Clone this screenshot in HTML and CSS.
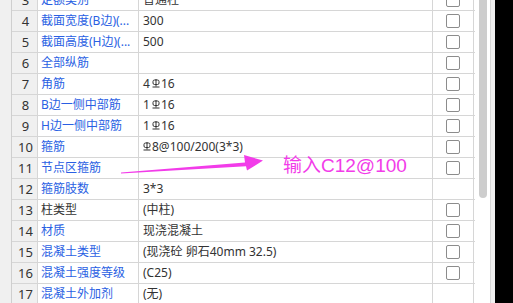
FILE: index.html
```html
<!DOCTYPE html>
<html lang="zh">
<head>
    <meta charset="UTF-8">
    <meta name="viewport" content="width=device-width, initial-scale=1.0">
    <title>属性编辑</title>
    <link rel="stylesheet" href="styles.css">
</head>
<body>
    <div class="screen">
        <div class="gutter"></div>

        <!-- 属性列表 -->
        <div class="grid">
            <div class="row first">
                <div class="num">3</div>
                <div class="name">定额类别</div>
                <div class="value">普通柱</div>
                <div class="check"><span class="box"></span></div>
            </div>
            <div class="row">
                <div class="num">4</div>
                <div class="name">截面宽度(B边)(...</div>
                <div class="value">300</div>
                <div class="check"><span class="box"></span></div>
            </div>
            <div class="row">
                <div class="num">5</div>
                <div class="name">截面高度(H边)(...</div>
                <div class="value">500</div>
                <div class="check"><span class="box"></span></div>
            </div>
            <div class="row">
                <div class="num">6</div>
                <div class="name">全部纵筋</div>
                <div class="value"></div>
                <div class="check"><span class="box"></span></div>
            </div>
            <div class="row">
                <div class="num">7</div>
                <div class="name">角筋</div>
                <div class="value">4<svg class="bar" viewBox="0 0 8 9"><rect x="1" y="1" width="6" height="4.5" rx="1.5"/><path d="M4 0V7.5M0.5 8H7.5"/></svg>16</div>
                <div class="check"><span class="box"></span></div>
            </div>
            <div class="row">
                <div class="num">8</div>
                <div class="name">B边一侧中部筋</div>
                <div class="value">1<svg class="bar" viewBox="0 0 8 9"><rect x="1" y="1" width="6" height="4.5" rx="1.5"/><path d="M4 0V7.5M0.5 8H7.5"/></svg>16</div>
                <div class="check"><span class="box"></span></div>
            </div>
            <div class="row">
                <div class="num">9</div>
                <div class="name">H边一侧中部筋</div>
                <div class="value">1<svg class="bar" viewBox="0 0 8 9"><rect x="1" y="1" width="6" height="4.5" rx="1.5"/><path d="M4 0V7.5M0.5 8H7.5"/></svg>16</div>
                <div class="check"><span class="box"></span></div>
            </div>
            <div class="row">
                <div class="num">10</div>
                <div class="name">箍筋</div>
                <div class="value"><svg class="bar lead" viewBox="0 0 8 9"><rect x="1" y="1" width="6" height="4.5" rx="1.5"/><path d="M4 0V7.5M0.5 8H7.5"/></svg>8@100/200(3*3)</div>
                <div class="check"><span class="box"></span></div>
            </div>
            <div class="row">
                <div class="num">11</div>
                <div class="name">节点区箍筋</div>
                <div class="value"></div>
                <div class="check"><span class="box"></span></div>
            </div>
            <div class="row">
                <div class="num">12</div>
                <div class="name">箍筋肢数</div>
                <div class="value">3*3</div>
                <div class="check"></div>
            </div>
            <div class="row">
                <div class="num">13</div>
                <div class="name plain">柱类型</div>
                <div class="value">(中柱)</div>
                <div class="check"><span class="box"></span></div>
            </div>
            <div class="row">
                <div class="num">14</div>
                <div class="name">材质</div>
                <div class="value">现浇混凝土</div>
                <div class="check"><span class="box"></span></div>
            </div>
            <div class="row">
                <div class="num">15</div>
                <div class="name">混凝土类型</div>
                <div class="value">(现浇砼 卵石40mm 32.5)</div>
                <div class="check"><span class="box"></span></div>
            </div>
            <div class="row">
                <div class="num">16</div>
                <div class="name">混凝土强度等级</div>
                <div class="value">(C25)</div>
                <div class="check"><span class="box"></span></div>
            </div>
            <div class="row">
                <div class="num">17</div>
                <div class="name">混凝土外加剂</div>
                <div class="value">(无)</div>
                <div class="check"></div>
            </div>
        </div>

        <div class="scroll"><div class="thumb"></div></div>
        <div class="frame"></div>
        <div class="desk"></div>

        <!-- 标注 -->
        <svg class="arrow" width="513" height="303" viewBox="0 0 513 303">
            <polygon points="121,172.4 245,162.6 244,155 263,160.5 247,170.5 246,166.2 121,173.6"/>
        </svg>
        <div class="note">输入C12@100</div>
    </div>
</body>
</html>
```

FILE: styles.css
```css
body {
    margin: 0;
    background-color: white;
    font-family: "Noto Sans", "Noto Sans CJK SC", sans-serif;
    font-size: 12px;
    color: #333;
}
.screen {
    position: relative;
    display: flex;
    width: 513px;
    height: 303px;
    overflow: hidden;
}
.gutter {
    width: 11px;
    background-color: #f0f0f0;
}
.grid {
    width: 463px;
    border-left: 1px solid #cfcfcf;
    display: flex;
    flex-direction: column;
}
.row {
    display: flex;
    height: 20px;
    border-bottom: 1px solid #d6d6d6;
    line-height: 20px;
}
.row.first {
    margin-top: -10px;
}
.num {
    width: 26px;
    padding-left: 2px;
    box-sizing: border-box;
    border-right: 1px solid #d6d6d6;
    background-color: #f0f0f0;
    text-align: center;
    font-size: 13px;
    color: #333;
}
.name {
    width: 97px;
    padding-left: 3px;
    border-right: 1px solid #d6d6d6;
    color: #2a5fe3;
    white-space: nowrap;
    overflow: hidden;
}
.name.plain {
    color: #333;
}
.value {
    width: 289px;
    padding-left: 4px;
    border-right: 1px solid #d6d6d6;
    white-space: nowrap;
    display: flex;
    align-items: center;
}
.check {
    width: 40px;
    border-right: 1px solid #d6d6d6;
    display: flex;
    align-items: center;
    justify-content: center;
}
.box {
    width: 12px;
    height: 12px;
    border: 1px solid #8c8c8c;
    border-radius: 2px;
    background-color: white;
}
.bar {
    width: 8px;
    height: 9px;
    margin: 0 1px 2px 2px;
    fill: none;
    stroke: #333;
    stroke-width: 1;
}
.bar.lead {
    margin-left: 0;
}
.scroll {
    width: 15px;
    background-color: white;
}
.thumb {
    width: 8px;
    height: 198px;
    margin-left: 4px;
    background-color: #cdcdcd;
    border-radius: 0 0 4px 4px;
}
.frame {
    width: 4px;
    border-left: 1px solid #d8d8d8;
    background-color: #f0f0f0;
}
.desk {
    flex: 1;
    background-color: black;
}
.arrow {
    position: absolute;
    left: 0;
    top: 0;
    fill: #f23ce9;
}
.note {
    position: absolute;
    left: 283px;
    top: 153px;
    font-family: "Liberation Sans", "Noto Sans CJK SC", sans-serif;
    font-size: 19px;
    line-height: 26px;
    color: #f23ce9;
}
```
